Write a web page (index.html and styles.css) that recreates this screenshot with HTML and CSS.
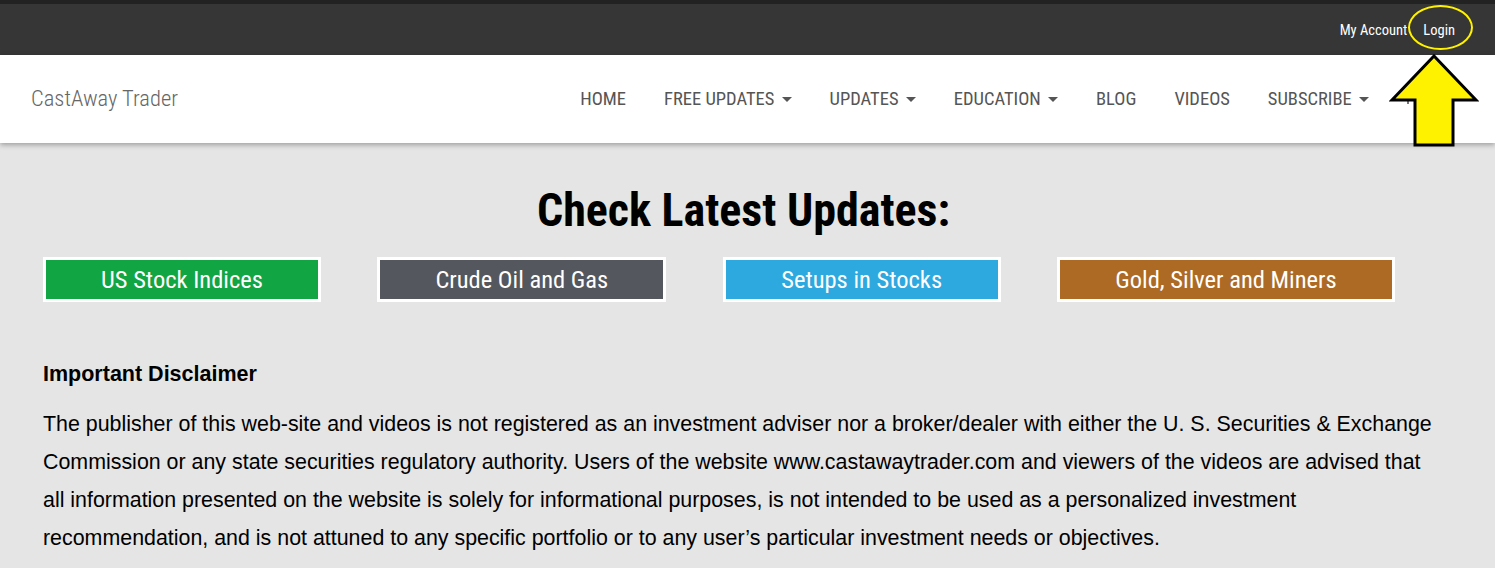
FILE: index.html
```html
<!DOCTYPE html>
<html lang="en">
<head>
  <meta charset="UTF-8" />
  <meta name="viewport" content="width=device-width, initial-scale=1.0"/>
  <title>CastAway Trader</title>
  <link rel="stylesheet" href="styles.css">
</head>
<body>
  <div class="topbar">
    <a href="#">My Account</a>
    <a href="#" class="login">Login</a>
  </div>

  <nav class="navbar">
    <a href="#" class="brand">CastAway Trader</a>
    <ul class="menu">
      <li><a href="#">HOME</a></li>
      <li><a href="#">FREE UPDATES <span class="caret"></span></a></li>
      <li><a href="#">UPDATES <span class="caret"></span></a></li>
      <li><a href="#">EDUCATION <span class="caret"></span></a></li>
      <li><a href="#">BLOG</a></li>
      <li><a href="#">VIDEOS</a></li>
      <li><a href="#">SUBSCRIBE <span class="caret"></span></a></li>
      <li><a href="#" class="search"></a></li>
    </ul>
    <svg class="arrow" width="90" height="96" viewBox="0 0 90 96">
      <polygon points="45,2 87,46 64,46 64,91 26,91 26,46 3,46" fill="#fff200" stroke="#000" stroke-width="3" stroke-linejoin="miter"/>
    </svg>
  </nav>

  <main class="content">
    <h1>Check Latest Updates:</h1>
    <div class="updates">
      <a href="#" class="btn btn-green">US Stock Indices</a>
      <a href="#" class="btn btn-gray">Crude Oil and Gas</a>
      <a href="#" class="btn btn-blue">Setups in Stocks</a>
      <a href="#" class="btn btn-brown">Gold, Silver and Miners</a>
    </div>

    <h3>Important Disclaimer</h3>
    <p>The publisher of this web-site and videos is not registered as an investment adviser nor a broker/dealer with either the U. S. Securities &amp; Exchange Commission or any state securities regulatory authority. Users of the website www.castawaytrader.com and viewers of the videos are advised that all information presented on the website is solely for informational purposes, is not intended to be used as a personalized investment recommendation, and is not attuned to any specific portfolio or to any user’s particular investment needs or objectives.</p>
  </main>
</body>
</html>
```

FILE: styles.css
```css
body {
  margin: 0;
  background: #e5e5e5;
  font-family: Roboto, 'Liberation Sans', sans-serif;
  font-stretch: 87.5%;
  color: #000;
}
a {
  text-decoration: none;
}
.topbar {
  background: #363636;
  border-top: 4px solid #222;
  box-sizing: border-box;
  height: 55px;
  display: flex;
  justify-content: flex-end;
  align-items: center;
  gap: 16px;
  padding: 2px 40px 0 0;
  font-size: 14.5px;
}
.topbar a {
  color: #fff;
}
.login {
  position: relative;
}
.login::after {
  content: "";
  position: absolute;
  left: -15px;
  top: -17px;
  width: 61px;
  height: 41px;
  border: 2px solid #fff200;
  border-radius: 50%;
}
.navbar {
  position: relative;
  background: #fff;
  height: 88px;
  display: flex;
  align-items: center;
  justify-content: space-between;
  padding: 0 31px;
  box-shadow: 0 2px 5px rgba(0, 0, 0, 0.3);
}
.brand {
  color: #666;
  font-size: 22.5px;
  font-weight: 300;
  margin-top: -3px;
}
.menu {
  list-style: none;
  margin: -1px 55px 0 0;
  padding: 0;
  display: flex;
  align-items: center;
  gap: 38px;
}
.menu a {
  color: #555;
  font-size: 18.5px;
}
.caret {
  display: inline-block;
  width: 0;
  height: 0;
  margin-left: 3px;
  vertical-align: middle;
  border-top: 5px solid #555;
  border-left: 5px solid transparent;
  border-right: 5px solid transparent;
}
/* search icon, mostly hidden under the arrow */
.search {
  display: block;
  width: 2px;
  height: 10px;
  background: #777;
}
.arrow {
  position: absolute;
  right: 16px;
  top: -1px;
}
.content {
  padding: 0 43px;
}
h1 {
  margin: 0;
  padding: 37px 8px 0 0;
  text-align: center;
  font-size: 46px;
  font-weight: 700;
  line-height: 60px;
}
.updates {
  display: flex;
  justify-content: space-between;
  margin-top: 17px;
  padding-right: 57px;
}
.btn {
  display: block;
  height: 39px;
  line-height: 39px;
  border: 3px solid #fff;
  color: #fff;
  text-align: center;
  font-size: 24.5px;
}
.btn-green {
  background: #12a544;
  width: 272px;
}
.btn-gray {
  background: #54575e;
  width: 283px;
}
.btn-blue {
  background: #2ea9e0;
  width: 272px;
}
.btn-brown {
  background: #ad6a24;
  width: 332px;
}
h3 {
  margin: 60px 0 0;
  font-family: 'Liberation Sans', Arial, sans-serif;
  font-size: 21.5px;
  font-weight: 700;
}
p {
  max-width: 1392px;
  margin: 18px 0 0;
  font-family: 'Liberation Sans', Arial, sans-serif;
  font-size: 21.4px;
  line-height: 38px;
}
```
